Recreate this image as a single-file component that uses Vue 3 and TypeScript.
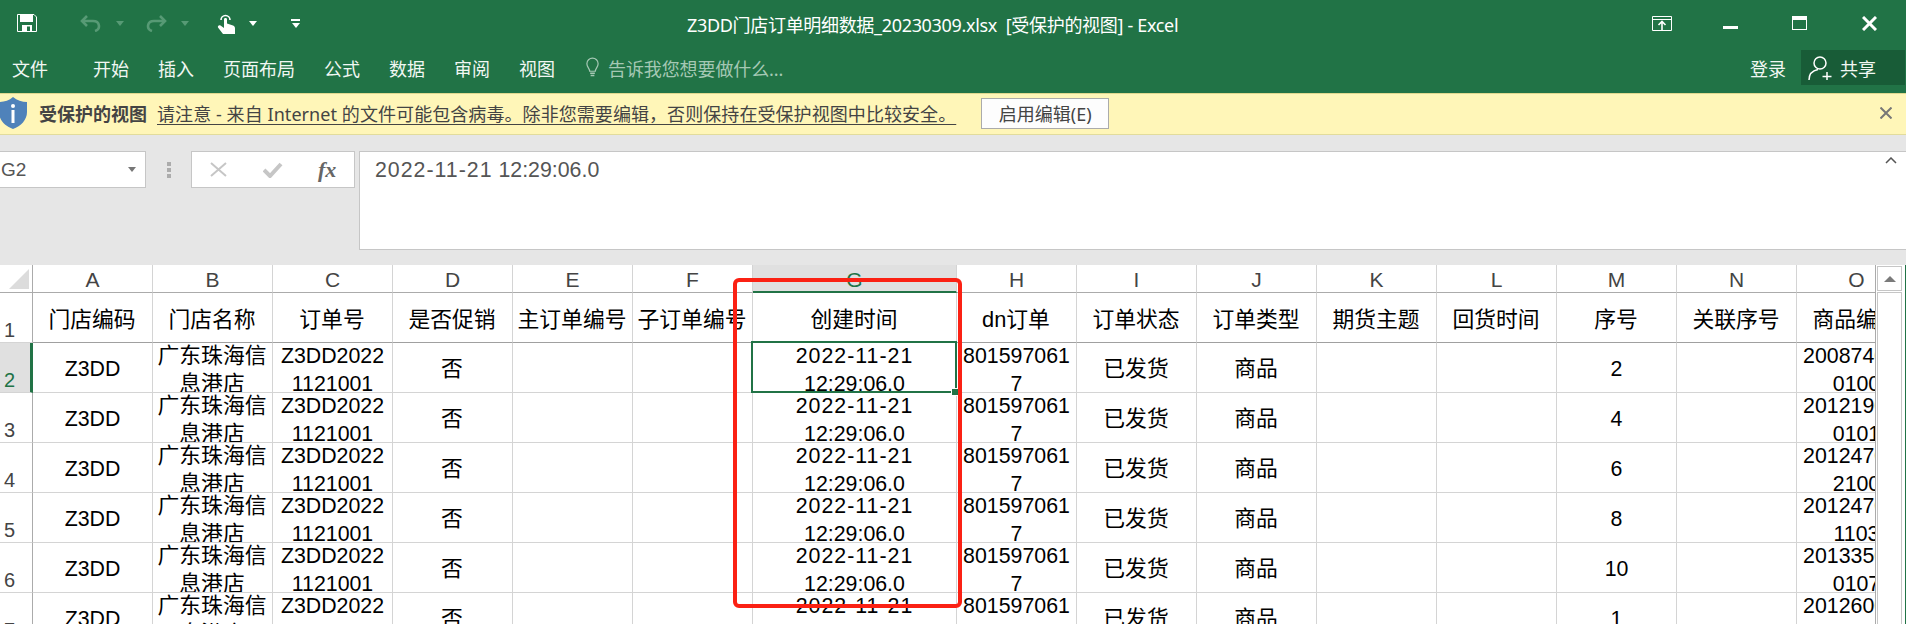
<script setup lang="ts">
const menuItems = ['开始', '插入', '页面布局', '公式', '数据', '审阅', '视图']

const columns = ['A', 'B', 'C', 'D', 'E', 'F', 'G', 'H', 'I', 'J', 'K', 'L', 'M', 'N', 'O']

const headers = [
  '门店编码', '门店名称', '订单号', '是否促销', '主订单编号', '子订单编号', '创建时间', 'dn订单',
  '订单状态', '订单类型', '期货主题', '回货时间', '序号', '关联序号', '商品编码',
]

// visible part of the goods code, the tail of the first line is cut off by the scrollbar edge
const orders = [
  { seq: '2', code: '200874000\n0100' },
  { seq: '4', code: '201219000\n0101' },
  { seq: '6', code: '201247000\n2100' },
  { seq: '8', code: '201247000\n1103' },
  { seq: '10', code: '201335000\n0107' },
  { seq: '1', code: '201260000\n0100' },
]

const rows = orders.map((order, i) => ({
  num: i + 2,
  cells: [
    'Z3DD', '广东珠海信\n息港店', 'Z3DD2022\n1121001', '否', '', '',
    '2022-11-21\n12:29:06.0', '801597061\n7', '已发货', '商品', '', '', '',
    order.seq, '', order.code,
  ].filter((_, idx) => idx !== 12),
}))

const hasCjk = (text: string) => /[\u4e00-\u9fff]/.test(text)
</script>

<template>
  <div class="app">
    <header class="titlebar">
      <div class="qat">
        <svg class="ic-save" viewBox="0 0 20 18" width="20" height="18">
          <path d="M0.5 0.5H17L19.5 3V17.5H0.5Z" fill="none" stroke="#fff" />
          <path d="M3 1H16V8H3Z" fill="#fff" />
          <path d="M5 11H15V17.5H5Z" fill="#fff" />
          <path d="M10 12.5H13V17H10Z" fill="#217346" />
        </svg>
        <svg class="ic-undo" viewBox="0 0 23 18" width="23" height="18">
          <path d="M8 2L3 7L8 12" fill="none" stroke="#579a75" stroke-width="2.6" />
          <path d="M3 7H14C21 7 22 15 16 17" fill="none" stroke="#579a75" stroke-width="2.6" />
        </svg>
        <i class="caret caret-dim caret-undo"></i>
        <svg class="ic-redo" viewBox="0 0 23 18" width="23" height="18">
          <path d="M15 2L20 7L15 12" fill="none" stroke="#579a75" stroke-width="2.6" />
          <path d="M20 7H9C2 7 1 15 7 17" fill="none" stroke="#579a75" stroke-width="2.6" />
        </svg>
        <i class="caret caret-dim caret-redo"></i>
        <svg class="ic-touch" viewBox="0 0 18 21" width="18" height="21">
          <path d="M4 7A4.5 4.5 0 1 1 13 7" fill="none" stroke="#fff" stroke-width="1.6" />
          <path d="M7 6.5C7 4.6 10 4.6 10 6.5V10.5L16 12.5C17.5 13 18 14 18 15.5V21H6L1 14.5C0.3 13 2.2 11.6 3.5 12.6L7 15Z" fill="#fff" />
        </svg>
        <i class="caret caret-touch"></i>
        <span class="customize">
          <i class="customize-bar"></i>
          <i class="caret"></i>
        </span>
      </div>
      <div class="title">Z3DD门店订单明细数据_20230309.xlsx&nbsp; [受保护的视图] - Excel</div>
      <div class="win-btns">
        <svg viewBox="0 0 20 15" width="20" height="15">
          <path d="M0.5 0.5H19.5V14.5H0.5Z M0.5 3.5H19.5" fill="none" stroke="#fff" />
          <path d="M10 14V6M6.5 9L10 5.5L13.5 9" fill="none" stroke="#fff" stroke-width="1.6" />
        </svg>
        <i class="win-min"></i>
        <i class="win-max"></i>
        <svg viewBox="0 0 15 15" width="15" height="15">
          <path d="M1 1L14 14M14 1L1 14" stroke="#fff" stroke-width="3" />
        </svg>
      </div>
    </header>

    <nav class="menubar">
      <span class="file-tab">文件</span>
      <span v-for="item in menuItems" :key="item">{{ item }}</span>
      <span class="tell">
        <svg viewBox="0 0 16 22" width="15" height="21">
          <path d="M5 15C5 12 2 10.500 2 7A6 6 0 0 1 14 7C14 10.500 11 12 11 15Z" fill="none" stroke="#a5c8b4" stroke-width="1.300" />
          <path d="M5.500 17H10.500M6 19.500H10" stroke="#a5c8b4" stroke-width="1.600" />
        </svg>
        告诉我您想要做什么...
      </span>
      <span class="login">登录</span>
      <span class="share">
        <svg viewBox="0 0 24 24" width="24" height="24">
          <circle cx="12" cy="7" r="6" fill="none" stroke="#fff" stroke-width="1.500" />
          <path d="M1 24C1 18 5 14.500 10 13.500M14.500 20.500H23.500M19 16V24" fill="none" stroke="#fff" stroke-width="1.500" />
        </svg>
        共享
      </span>
    </nav>

    <div class="msgbar">
      <svg class="shield" viewBox="0 0 28 32" width="28" height="32">
        <path d="M14 0C18 3.500 23 5 28 5V15C28 23 22 29 14 32C6 29 0 23 0 15V5C5 5 10 3.500 14 0Z" fill="#4f82ba" />
        <circle cx="14" cy="9" r="2" fill="#fff" />
        <rect x="12.500" y="13" width="3" height="13" fill="#fff" />
      </svg>
      <strong class="msg-title">受保护的视图</strong>
      <span class="msg-text">请注意 - 来自 Internet 的文件可能包含病毒。除非您需要编辑，否则保持在受保护视图中比较安全。</span>
      <button class="msg-btn" type="button">启用编辑(E)</button>
      <svg class="msg-close" viewBox="0 0 12 12" width="12" height="12">
        <path d="M0.500 0.500L11.500 11.500M11.500 0.500L0.500 11.500" stroke="#777" stroke-width="2" />
      </svg>
    </div>

    <div class="formula">
      <div class="namebox">G2<i class="caret caret-gray"></i></div>
      <div class="dots"><i></i><i></i><i></i></div>
      <div class="fx-box">
        <svg viewBox="0 0 17 15" width="17" height="15">
          <path d="M1 1L16 14M16 1L1 14" stroke="#c6c6c6" stroke-width="2" />
        </svg>
        <svg viewBox="0 0 20 16" width="20" height="16">
          <path d="M1 8L7 14L18 2" fill="none" stroke="#c6c6c6" stroke-width="4" />
        </svg>
        <span class="fx">fx</span>
      </div>
      <div class="fx-input">
        <span><span class="date">2022-11-21</span> 12:29:06.0</span>
        <svg viewBox="0 0 12 7" width="12" height="7">
          <path d="M1 6L6 1L11 6" fill="none" stroke="#555" stroke-width="1.500" />
        </svg>
      </div>
    </div>

    <div class="sheet">
      <div class="grid-wrap">
        <div class="grid">
          <div class="corner">
            <svg viewBox="0 0 20 20" width="20" height="20"><path d="M20 0V20H0Z" fill="#dcdcdc" /></svg>
          </div>
          <div
            v-for="col in columns"
            :key="col"
            class="col-head"
            :class="{ active: col === 'G' }"
          >{{ col }}</div>

          <div class="row-head">1</div>
          <div v-for="h in headers" :key="h" class="cell single head-cell">
            <span class="line" :class="{ cjk: hasCjk(h) }">{{ h }}</span>
          </div>

          <template v-for="row in rows" :key="row.num">
            <div class="row-head" :class="{ active: row.num === 2 }">{{ row.num }}</div>
            <div
              v-for="(cell, i) in row.cells"
              :key="i"
              class="cell"
              :class="{ single: !cell.includes('\n') }"
            >
              <span
                v-for="line in cell.split('\n')"
                :key="line"
                class="line"
                :class="{ date: line.includes('-'), cjk: hasCjk(line) }"
              >{{ line }}</span>
            </div>
          </template>
        </div>
        <div class="selection"><i class="handle"></i></div>
        <div class="highlight"></div>
      </div>
      <div class="scrollbar">
        <div class="scroll-up"><i></i></div>
        <div class="scroll-track"></div>
      </div>
    </div>
  </div>
</template>

<style scoped>
.app {
  width: 1906px;
  height: 624px;
  overflow: hidden;
  display: flex;
  flex-direction: column;
  background: #fff;
  font-family: "Noto Sans", "Noto Sans CJK SC", sans-serif;
  font-size: 18px;
  color: #fff;
}

/* title bar */
.titlebar {
  height: 46px;
  flex: none;
  display: flex;
  align-items: center;
  background: #217346;
}

.qat {
  width: 687px;
  flex: none;
  display: flex;
  align-items: center;
  padding-left: 17px;
  box-sizing: border-box;
}

.ic-undo {
  margin-left: 42px;
}

.ic-redo {
  margin-left: 21px;
}

.ic-touch {
  margin-left: 28px;
}

.caret {
  display: block;
  width: 0;
  height: 0;
  border-left: 4px solid transparent;
  border-right: 4px solid transparent;
  border-top: 5px solid #fff;
}

.caret-dim {
  border-top-color: #579a75;
}

.caret-undo {
  margin-left: 14px;
}

.caret-redo {
  margin-left: 13px;
}

.caret-touch {
  margin-left: 14px;
}

.customize {
  margin-left: 34px;
  display: flex;
  flex-direction: column;
  align-items: center;
  gap: 2px;
}

.customize-bar {
  width: 9px;
  height: 2px;
  background: #fff;
}

.title {
  padding-top: 2px;
  font-size: 18px;
  letter-spacing: -0.32px;
  white-space: nowrap;
}

.win-btns {
  margin-left: auto;
  display: flex;
  align-items: center;
  padding-right: 29px;
}

.win-btns svg:first-child {
  margin-right: 51px;
}

.win-min {
  width: 15px;
  height: 3px;
  margin-top: 9px;
  margin-right: 54px;
  background: #fff;
}

.win-max {
  width: 15px;
  height: 14px;
  margin-right: 55px;
  box-sizing: border-box;
  border: 1px solid #fff;
  border-top-width: 4px;
}

/* menu row */
.menubar {
  height: 47px;
  flex: none;
  display: flex;
  align-items: center;
  gap: 29px;
  padding-left: 12px;
  padding-bottom: 4px;
  box-sizing: border-box;
  background: #217346;
  white-space: nowrap;
  color: #f1f7f3;
}

.file-tab {
  margin-right: 16px;
}

.tell {
  display: flex;
  align-items: center;
  gap: 8px;
  margin-left: 1px;
  color: #a5c8b4;
  letter-spacing: -0.1px;
}

.login {
  margin-left: auto;
  margin-right: -14px;
}

.share {
  width: 104px;
  height: 35px;
  display: flex;
  align-items: center;
  gap: 8px;
  padding-left: 7px;
  margin-right: 1px;
  box-sizing: border-box;
  background: #185c37;
}

/* protected view bar */
.msgbar {
  height: 42px;
  flex: none;
  display: flex;
  align-items: center;
  padding-bottom: 2px;
  box-sizing: border-box;
  background: #fff6b8;
  border-top: 1px solid #dfd88f;
  border-bottom: 1px solid #e2dc9c;
  color: #444;
  white-space: nowrap;
}

.shield {
  margin-left: -1px;
  margin-right: 12px;
  flex: none;
}

.msg-title {
  font-weight: 700;
}

.msg-text {
  margin-left: 10px;
  letter-spacing: 0.07px;
  text-decoration: underline;
  text-underline-offset: 3px;
}

.msg-btn {
  width: 128px;
  height: 31px;
  margin-left: 25px;
  padding: 0;
  box-sizing: border-box;
  background: #fdfdfd;
  border: 1px solid #ababab;
  font: inherit;
  color: #444;
}

.msg-close {
  margin-left: auto;
  margin-right: 14px;
}

/* formula bar */
.formula {
  height: 130px;
  flex: none;
  display: flex;
  align-items: flex-start;
  padding-top: 16px;
  box-sizing: border-box;
  background: #e6e6e6;
  color: #555;
}

.namebox {
  width: 146px;
  height: 37px;
  display: flex;
  align-items: center;
  justify-content: space-between;
  padding: 0 9px 0 1px;
  box-sizing: border-box;
  background: #fff;
  border: 1px solid #c6c6c6;
  border-left: none;
  font-family: "Liberation Sans", sans-serif;
  font-size: 19px;
}

.caret-gray {
  border-top-color: #777;
}

.dots {
  width: 45px;
  height: 37px;
  display: flex;
  flex-direction: column;
  align-items: center;
  justify-content: center;
  gap: 2px;
}

.dots i {
  width: 4px;
  height: 4px;
  background: #acacac;
}

.fx-box {
  width: 164px;
  height: 37px;
  display: flex;
  align-items: center;
  padding-left: 18px;
  box-sizing: border-box;
  background: #fff;
  border: 1px solid #c6c6c6;
}

.fx-box svg:nth-child(2) {
  margin-left: 36px;
}

.fx {
  margin-left: 35px;
  font-family: "Liberation Serif", serif;
  font-style: italic;
  font-weight: 700;
  font-size: 22px;
  color: #666;
}

.fx-input {
  flex: 1;
  height: 99px;
  margin-left: 4px;
  display: flex;
  justify-content: space-between;
  padding: 3px 9px 0 15px;
  box-sizing: border-box;
  background: #fff;
  border: 1px solid #c6c6c6;
  border-right: none;
  font-family: "Liberation Sans", sans-serif;
  font-size: 21.33px;
  line-height: 30px;
}

.fx-input svg {
  margin-top: 2px;
}

/* sheet */
.sheet {
  flex: 1;
  min-height: 0;
  display: flex;
  box-sizing: border-box;
  border-right: 1px solid #217346;
}

.grid-wrap {
  position: relative;
  width: 1876px;
  flex: none;
  overflow: hidden;
  box-sizing: border-box;
  border-right: 1px solid #ababab;
}

.grid {
  display: grid;
  grid-template-columns: 33px repeat(6, 120px) 204px repeat(8, 120px);
  grid-template-rows: 28px repeat(7, 50px);
  width: 1917px;
  font-family: "Liberation Sans", "Noto Sans CJK SC", sans-serif;
  font-size: 21.33px;
  color: #000;
}

.corner {
  display: flex;
  align-items: flex-end;
  justify-content: flex-end;
  padding: 0 3px 3px 0;
  box-sizing: border-box;
  border-right: 1px solid #ababab;
  border-bottom: 1px solid #ababab;
}

.col-head {
  box-sizing: border-box;
  border-right: 1px solid #d4d4d4;
  border-bottom: 1px solid #ababab;
  text-align: center;
  font-size: 21px;
  line-height: 30px;
  color: #444;
  overflow: hidden;
}

.col-head.active {
  background: #e0e0e0;
  border-bottom: 2px solid #217346;
  color: #217346;
}

.row-head {
  box-sizing: border-box;
  padding: 27px 0 0 4px;
  border-right: 1px solid #ababab;
  border-bottom: 1px solid #d4d4d4;
  font-size: 20px;
  line-height: 20px;
  color: #444;
  overflow: hidden;
}

.row-head.active {
  background: #e0e0e0;
  border-right: 3px solid #217346;
  color: #217346;
}

.cell {
  min-width: 0;
  box-sizing: border-box;
  border-right: 1px solid #d4d4d4;
  border-bottom: 1px solid #d4d4d4;
  overflow: hidden;
  text-align: center;
  line-height: 28px;
  white-space: nowrap;
}

.cell.single {
  line-height: 54px;
}

.cell.head-cell {
  line-height: 56px;
  border-bottom-color: #a0a0a0;
}

.line {
  display: block;
  margin-top: -1px;
}

.line + .line {
  margin-top: 0;
}

.line.cjk {
  font-size: 21.8px;
  margin-right: 1px;
}

.date {
  letter-spacing: 1px;
}

.selection {
  position: absolute;
  left: 751px;
  top: 76px;
  width: 206px;
  height: 52px;
  box-sizing: border-box;
  border: 2px solid #217346;
}

.handle {
  position: absolute;
  right: -3px;
  bottom: -4px;
  width: 6px;
  height: 6px;
  background: #217346;
  outline: 1px solid #fff;
}

.highlight {
  position: absolute;
  left: 733px;
  top: 13px;
  width: 229px;
  height: 330px;
  box-sizing: border-box;
  border: 4px solid #fb2114;
  border-radius: 6px;
}

.scrollbar {
  width: 25px;
  margin-left: 1px;
  display: flex;
  flex-direction: column;
  padding-top: 1px;
  box-sizing: border-box;
}

.scroll-up {
  height: 25px;
  flex: none;
  display: flex;
  align-items: center;
  justify-content: center;
  box-sizing: border-box;
  border: 1px solid #c6c6c6;
}

.scroll-up i {
  border-left: 6px solid transparent;
  border-right: 6px solid transparent;
  border-bottom: 6px solid #7a7a7a;
}

.scroll-track {
  flex: 1;
  margin-top: 1px;
  box-sizing: border-box;
  border: 1px solid #c6c6c6;
  border-bottom: none;
}
</style>

<style>
html,
body {
  margin: 0;
  overflow: hidden;
}
</style>
